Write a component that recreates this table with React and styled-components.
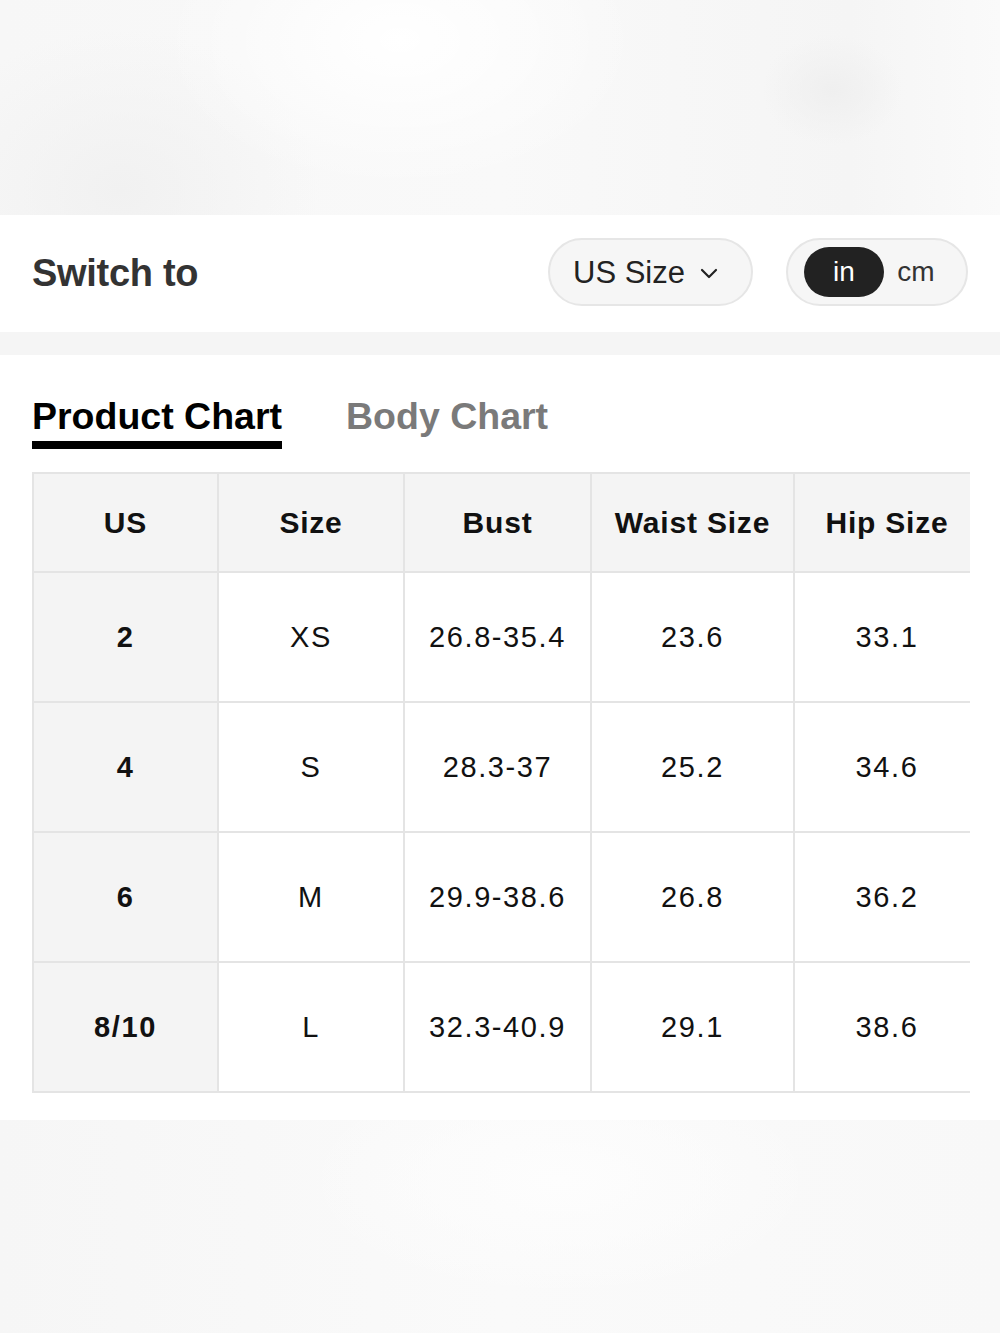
import React, { useState } from "react";
import styled, { createGlobalStyle } from "styled-components";

const GlobalStyle = createGlobalStyle`
  html, body {
    margin: 0;
    padding: 0;
    background: #ffffff;
  }
  body {
    font-family: "Liberation Sans", Arial, Helvetica, sans-serif;
    color: #111;
  }
`;

const Page = styled.div`
  width: 1000px;
  min-height: 1333px;
  display: flex;
  flex-direction: column;
  background: #ffffff;
`;

const Backdrop = styled.div`
  height: ${(p) => p.$h}px;
  flex-shrink: 0;
  background:
    radial-gradient(ellipse 70px 55px at 832px 90px, #efefef 0%, rgba(239, 239, 239, 0) 100%),
    radial-gradient(ellipse 240px 150px at 400px 40px, #ffffff 0%, rgba(255, 255, 255, 0) 100%),
    radial-gradient(ellipse 200px 160px at 120px 190px, #f1f1f1 0%, rgba(241, 241, 241, 0) 100%),
    linear-gradient(90deg, #f7f7f7 0%, #f9f9f9 50%, #f5f5f5 85%, #fafafa 100%);
`;

const BottomBackdrop = styled.div`
  flex: 1;
  background:
    radial-gradient(ellipse 260px 120px at 560px 60px, #fdfdfd 0%, rgba(253, 253, 253, 0) 100%),
    linear-gradient(90deg, #f6f6f6 0%, #fafafa 50%, #f8f8f8 100%);
`;

const SwitchBar = styled.div`
  height: 117px;
  display: flex;
  align-items: center;
  padding: 0 32px 4px;
  box-sizing: border-box;
  background: #ffffff;
`;

const SwitchLabel = styled.div`
  font-size: 38px;
  font-weight: 700;
  color: #333333;
  letter-spacing: -0.3px;
  flex: 1;
  padding-top: 4px;
`;

const Pill = styled.div`
  height: 68px;
  box-sizing: border-box;
  border: 2px solid #e6e6e6;
  border-radius: 34px;
  background: #f6f6f6;
  display: flex;
  align-items: center;
`;

const SizePill = styled(Pill)`
  width: 205px;
  padding: 2px 0 0 23px;
  gap: 14px;
  font-size: 31px;
  color: #222;
  margin-right: 33px;
`;

const UnitPill = styled(Pill)`
  width: 182px;
  padding: 0 16px;
  gap: 12px;
`;

const Unit = styled.div`
  height: 50px;
  width: ${(p) => (p.$active ? 80 : 40)}px;
  border-radius: 25px;
  display: flex;
  align-items: center;
  justify-content: center;
  font-size: 28px;
  background: ${(p) => (p.$active ? "#222222" : "transparent")};
  color: ${(p) => (p.$active ? "#ffffff" : "#333333")};
  cursor: pointer;
`;

const Divider = styled.div`
  height: 23px;
  background: #f5f5f5;
`;

const ChartSection = styled.div`
  padding: 40px 30px 27px 32px;
  background: #ffffff;
`;

const Tabs = styled.div`
  display: flex;
  gap: 64px;
  margin-bottom: 23px;
`;

const Tab = styled.div`
  font-size: 37.5px;
  font-weight: 700;
  color: ${(p) => (p.$active ? "#000000" : "#7a7a7a")};
  padding-bottom: 4px;
  border-bottom: 8px solid ${(p) => (p.$active ? "#000000" : "transparent")};
  line-height: 42px;
  cursor: pointer;
`;

const TableClip = styled.div`
  width: 938px;
  overflow: hidden;
`;

const Table = styled.table`
  border-collapse: collapse;
  table-layout: fixed;
  width: 947px;
`;

const Cell = styled.td`
  border: 2px solid #e4e4e4;
  text-align: center;
  padding: 0;
  height: ${(p) => (p.$head ? 97 : 128)}px;
  font-size: ${(p) => (p.$head ? 30 : 29)}px;
  letter-spacing: ${(p) => (p.$head ? 0.8 : 1.6)}px;
  font-weight: ${(p) => (p.$bold ? 700 : 400)};
  background: ${(p) => (p.$shade ? "#f4f4f4" : "#ffffff")};
  color: #111;
  white-space: nowrap;
`;

const Chevron = () => (
  <svg width="20" height="14" viewBox="0 0 20 14" fill="none">
    <path d="M3 4l7 7 7-7" stroke="#222" strokeWidth="2.2" strokeLinecap="round" strokeLinejoin="round" />
  </svg>
);

const headers = ["US", "Size", "Bust", "Waist Size", "Hip Size"];
const widths = [185, 186, 187, 203, 186];

const rows = [
  ["2", "XS", "26.8-35.4", "23.6", "33.1"],
  ["4", "S", "28.3-37", "25.2", "34.6"],
  ["6", "M", "29.9-38.6", "26.8", "36.2"],
  ["8/10", "L", "32.3-40.9", "29.1", "38.6"],
];

export default function App() {
  const [unit, setUnit] = useState("in");
  const [tab, setTab] = useState("product");

  return (
    <Page>
      <GlobalStyle />
      <Backdrop $h={215} />
      <SwitchBar>
        <SwitchLabel>Switch to</SwitchLabel>
        <SizePill>
          US Size
          <Chevron />
        </SizePill>
        <UnitPill>
          <Unit $active={unit === "in"} onClick={() => setUnit("in")}>in</Unit>
          <Unit $active={unit === "cm"} onClick={() => setUnit("cm")}>cm</Unit>
        </UnitPill>
      </SwitchBar>
      <Divider />
      <ChartSection>
        <Tabs>
          <Tab $active={tab === "product"} onClick={() => setTab("product")}>Product Chart</Tab>
          <Tab $active={tab === "body"} onClick={() => setTab("body")}>Body Chart</Tab>
        </Tabs>
        <TableClip>
          <Table>
            <colgroup>
              {widths.map((w, i) => (
                <col key={i} style={{ width: w }} />
              ))}
            </colgroup>
            <thead>
              <tr>
                {headers.map((h) => (
                  <Cell as="th" key={h} $head $bold $shade>
                    {h}
                  </Cell>
                ))}
              </tr>
            </thead>
            <tbody>
              {rows.map((r) => (
                <tr key={r[0]}>
                  {r.map((v, i) => (
                    <Cell key={i} $bold={i === 0} $shade={i === 0}>
                      {v}
                    </Cell>
                  ))}
                </tr>
              ))}
            </tbody>
          </Table>
        </TableClip>
      </ChartSection>
      <BottomBackdrop />
    </Page>
  );
}
